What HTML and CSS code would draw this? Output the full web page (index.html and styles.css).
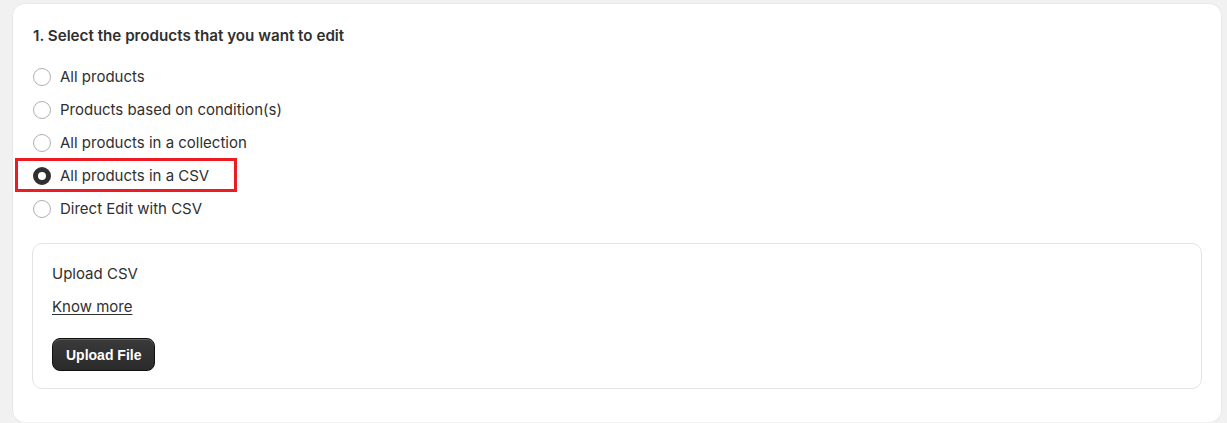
FILE: index.html
```html
<!DOCTYPE html>
<html>
<head>
<meta charset="utf-8">
<link rel="stylesheet" href="styles.css">
</head>
<body>
<div class="page">
  <section class="card">
    <h2 class="title">1. Select the products that you want to edit</h2>
    <div class="options">
      <label class="option"><span class="radio"></span><span>All products</span></label>
      <label class="option"><span class="radio"></span><span>Products based on condition(s)</span></label>
      <label class="option"><span class="radio"></span><span>All products in a collection</span></label>
      <label class="option highlighted"><span class="radio checked"></span><span>All products in a CSV</span><span class="mark"></span></label>
      <label class="option"><span class="radio"></span><span>Direct Edit with CSV</span></label>
    </div>
    <div class="upload-box">
      <div class="upload-title">Upload CSV</div>
      <a class="know-more" href="#">Know more</a>
      <button class="btn">Upload File</button>
    </div>
  </section>
</div>
</body>
</html>
```
FILE: styles.css
```css
* { box-sizing: border-box; }
html, body { margin: 0; padding: 0; background: #f1f1f1; }
body { font-family: Inter, "Noto Sans", sans-serif; color: #303030; font-size: 15px; }
.page { padding: 4px 6px 0 13px; }
.card {
  background: #fff;
  border-radius: 12px;
  padding: 22px 19px 33px 20px;
  box-shadow: 0 0 0 1px #e8e8e8;
}
.title {
  margin: 0;
  font-size: 15.2px;
  line-height: 20px;
  font-weight: 600;
  color: #303030;
}
.options {
  margin-top: 14px;
  display: flex;
  flex-direction: column;
}
.option {
  position: relative;
  display: flex;
  align-items: center;
  gap: 9px;
  height: 33px;
  font-size: 15px;
  color: #303030;
}
.radio {
  width: 18px;
  height: 18px;
  border-radius: 50%;
  border: 1px solid #b0b0b0;
  background: #fff;
  flex: none;
}
.radio.checked { border: 5.5px solid #303030; }
.mark {
  position: absolute;
  left: -18px;
  top: -1px;
  width: 222px;
  height: 34px;
  border: 3px solid #ed1c24;
}
.upload-box {
  margin-top: 18px;
  margin-left: -1px;
  border: 1px solid #e3e3e3;
  border-radius: 10px;
  padding: 20px 19px 17px 19px;
  display: flex;
  flex-direction: column;
  align-items: flex-start;
}
.upload-title { line-height: 20px; font-size: 15px; }
.know-more {
  margin-top: 13px;
  line-height: 20px;
  font-size: 15px;
  color: #303030;
  text-decoration: underline;
  text-underline-offset: 2px;
}
.btn {
  margin-top: 21px;
  height: 33px;
  padding: 0 13px;
  border-radius: 8px;
  border: 1px solid #111;
  background: linear-gradient(#3a3a3a, #2a2a2a);
  color: #fff;
  font-family: "Liberation Sans", Arial, sans-serif;
  font-weight: 700;
  font-size: 14px;
  box-shadow: inset 0 1px 0 rgba(255,255,255,0.2);
}
```
